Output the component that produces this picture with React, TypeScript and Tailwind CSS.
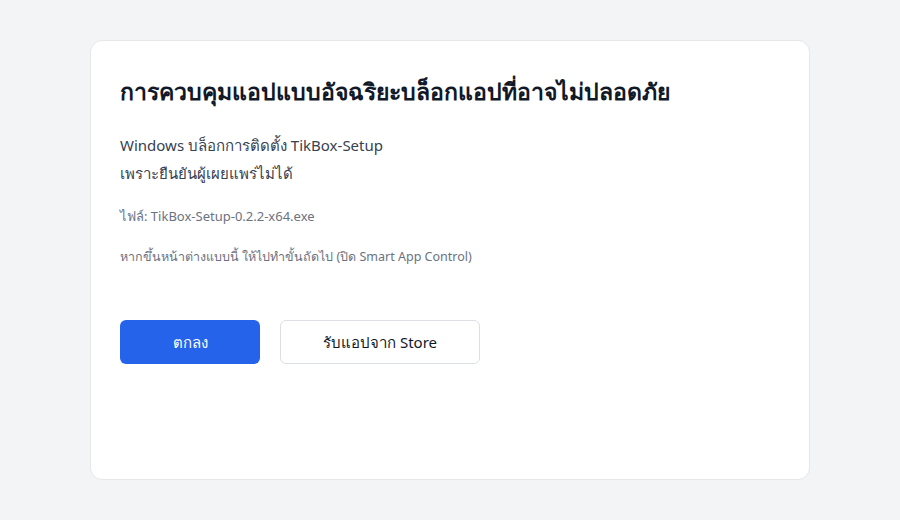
export default function App() {
  return (
    <div
      className="min-h-screen w-full bg-[#f3f4f6] pt-[40px]"
      style={{ fontFamily: '"Noto Sans", sans-serif' }}
    >
      <div className="mx-auto flex h-[440px] w-[720px] flex-col rounded-xl border border-[#e5e7eb] bg-white px-[29px] pt-[32px]">
        <h1 className="text-[23px] font-bold leading-[36px] text-[#111827]">
          การควบคุมแอปแบบอัจฉริยะบล็อกแอปที่อาจไม่ปลอดภัย
        </h1>
        <p className="mt-[22px] text-[15px] leading-[28px] text-[#374151]">
          Windows บล็อกการติดตั้ง TikBox-Setup
          <br />
          เพราะยืนยันผู้เผยแพร่ไม่ได้
        </p>
        <p className="mt-[19px] text-[13px] leading-[20px] text-[#6b7280]">
          ไฟล์: TikBox-Setup-0.2.2-x64.exe
        </p>
        <p className="mt-[22px] text-[12.5px] leading-[18px] text-[#6b7280]">
          หากขึ้นหน้าต่างแบบนี้ ให้ไปทำขั้นถัดไป (ปิด Smart App Control)
        </p>
        <div className="mt-[54px] flex gap-[20px]">
          <button className="h-[44px] w-[140px] rounded-md bg-[#2563eb] text-[15px] text-white">
            ตกลง
          </button>
          <button className="h-[44px] w-[200px] rounded-md border border-[#dcdfe4] bg-white text-[15px] text-[#111827]">
            รับแอปจาก Store
          </button>
        </div>
      </div>
    </div>
  );
}
